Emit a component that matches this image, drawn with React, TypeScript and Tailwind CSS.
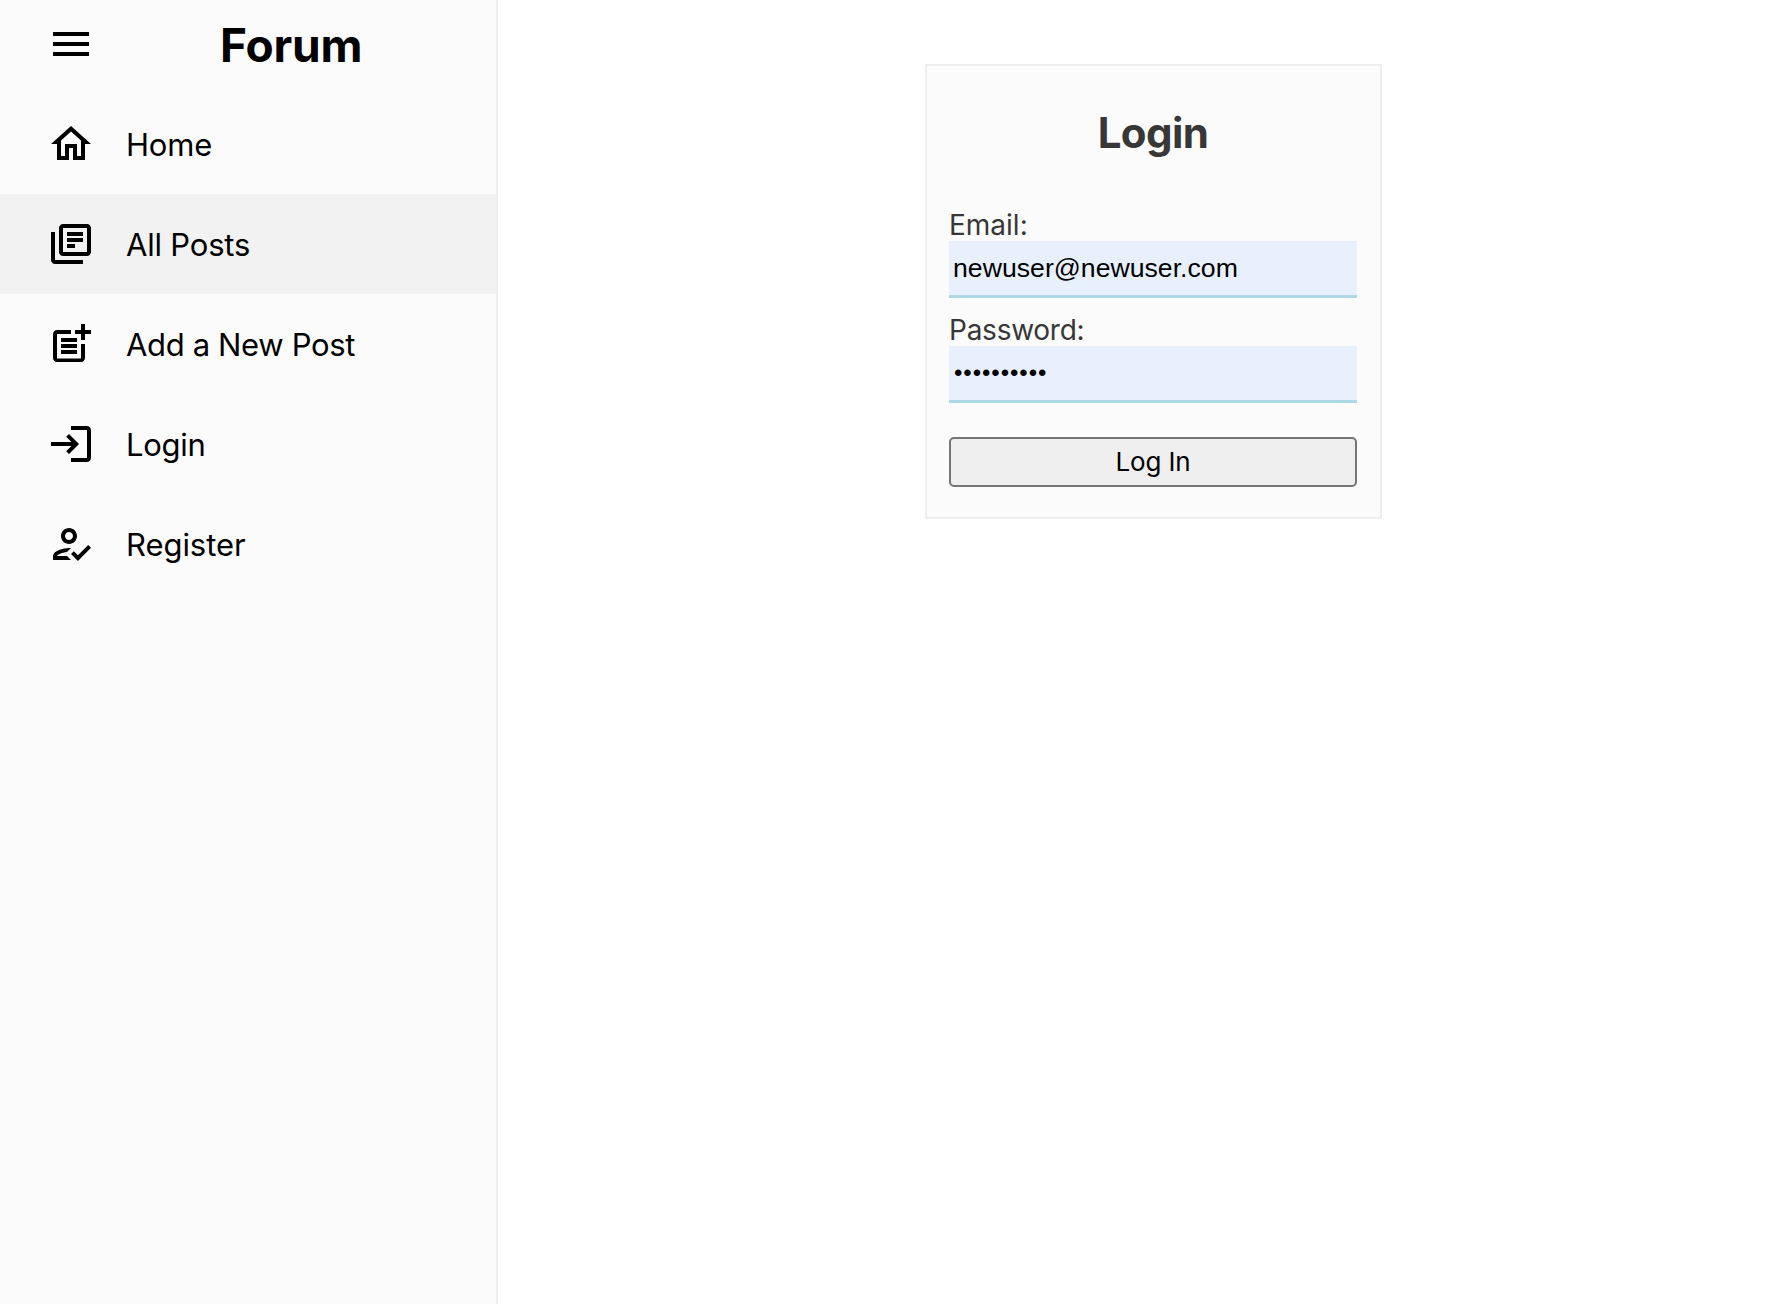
import { MdMenu, MdOutlineHome, MdOutlineLibraryBooks, MdPostAdd, MdLogin, MdOutlineHowToReg } from "react-icons/md";

const items = [
  { label: "Home", icon: MdOutlineHome, active: false, tracking: "tracking-[-0.2px]" },
  { label: "All Posts", icon: MdOutlineLibraryBooks, active: true, tracking: "tracking-[-0.2px]" },
  { label: "Add a New Post", icon: MdPostAdd, active: false, tracking: "tracking-[-0.35px]" },
  { label: "Login", icon: MdLogin, active: false, tracking: "tracking-[-0.3px]" },
  { label: "Register", icon: MdOutlineHowToReg, active: false, tracking: "tracking-[-0.06px]" },
];

export default function App() {
  return (
    <div className="flex h-screen overflow-hidden bg-white font-['Inter',sans-serif] text-black">
      <aside className="w-[498px] shrink-0 border-r-2 border-[#eeeeee] bg-[#fbfbfb]">
        <header className="flex h-[94px] items-start pl-[47px] pt-5">
          <MdMenu className="size-12" />
          <h1 className="-mt-px ml-[125px] text-[46px] leading-[52px] font-bold tracking-[-0.2px]">Forum</h1>
        </header>
        <nav>
          {items.map(({ label, icon: Icon, active, tracking }) => (
            <a key={label} className={`flex h-[100px] items-center gap-[31px] pl-[47px] ${active ? "bg-[#f2f2f2]" : ""}`}>
              <Icon className="size-12" />
              <span className={`pt-0.5 text-[31px] leading-9 ${tracking}`}>{label}</span>
            </a>
          ))}
        </nav>
      </aside>
      <main className="flex-1 pt-16 pl-[427px]">
        <form className="flex h-[455px] w-[457px] flex-col border-2 border-[#eeeeee] bg-[#fbfbfb] pr-[23px] pl-[22px] text-[#373737]">
          <h2 className="mt-[41px] text-center text-[42px] leading-[52px] font-bold tracking-[-0.6px]">Login</h2>
          <label htmlFor="email" className="-mb-px mt-[50px] text-[28px] leading-[33px]">Email:</label>
          <input id="email" className="h-[57px] border-b-[3px] border-[#add8e6] bg-[#e8f0fe] px-1 font-['Liberation_Sans',sans-serif] text-[26.67px] text-black" defaultValue="newuser@newuser.com" />
          <label htmlFor="password" className="-mb-px mt-4 text-[28px] leading-[33px] tracking-[-0.25px]">Password:</label>
          <input id="password" type="password" className="h-[57px] border-b-[3px] border-[#add8e6] bg-[#e8f0fe] pr-1 pl-[5px] font-['Liberation_Sans',sans-serif] text-[24px] tracking-[0.93px] text-black" defaultValue="newuser123" />
          <button type="button" className="mt-[34px] h-[50px] rounded-[5px] border-2 border-[#767676] bg-[#efefef] pb-px text-[26px] tracking-[-0.15px] text-black">Log In</button>
        </form>
      </main>
    </div>
  );
}
